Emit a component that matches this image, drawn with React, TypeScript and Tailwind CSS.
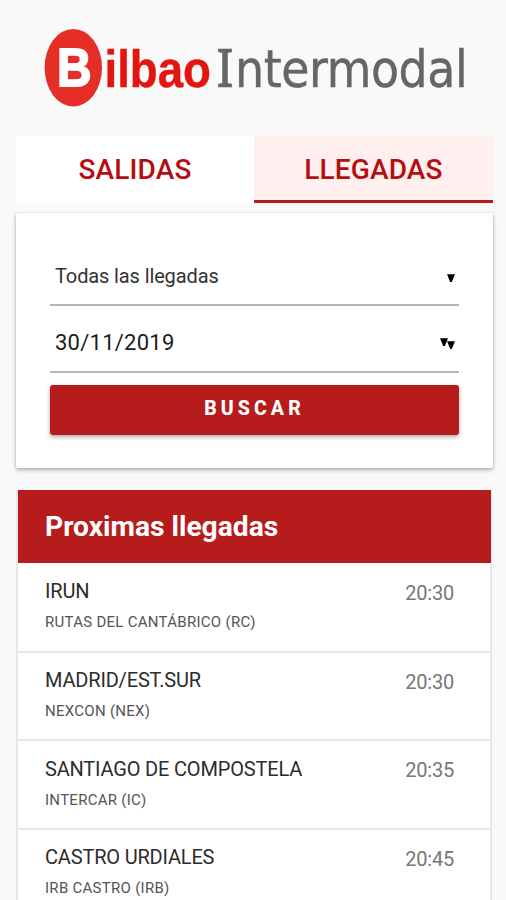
const arrivals = [
  { city: "IRUN", company: "RUTAS DEL CANTÁBRICO (RC)", time: "20:30" },
  { city: "MADRID/EST.SUR", company: "NEXCON (NEX)", time: "20:30" },
  { city: "SANTIAGO DE COMPOSTELA", company: "INTERCAR (IC)", time: "20:35" },
  { city: "CASTRO URDIALES", company: "IRB CASTRO (IRB)", time: "20:45" },
];

function Logo() {
  return (
    <svg width="450" height="90" viewBox="40 26 450 90" role="img" aria-label="Bilbao Intermodal">
      <ellipse cx="73.3" cy="67.7" rx="28.7" ry="38.8" fill="#e52e27" />
      <text x="57" y="86" fontFamily="Liberation Sans" fontWeight="700" fontSize="53" fill="#fff" stroke="#fff" strokeWidth="1.8" textLength="34.5" lengthAdjust="spacingAndGlyphs">
        B
      </text>
      <text x="104.5" y="86.5" fontFamily="Liberation Sans" fontWeight="700" fontSize="52" fill="#e2150f" stroke="#e2150f" strokeWidth="0.4" textLength="106.5" lengthAdjust="spacingAndGlyphs">
        ilbao
      </text>
      <text x="216.3" y="86.5" fontFamily="Noto Sans" fontSize="52" fill="#666" stroke="#666" strokeWidth="0.6">
        I
        <tspan x="235" fontFamily="DejaVu Sans" fontStretch="condensed" fontSize="51" letterSpacing="-0.4" strokeWidth="0.4">
          ntermodal
        </tspan>
      </text>
    </svg>
  );
}

function Triangle() {
  return (
    <svg width="8" height="8" viewBox="0 0 8 8">
      <path d="M0 0.3H8L4.8 8H3.2Z" fill="#000" />
    </svg>
  );
}

export default function App() {
  return (
    <div className="h-[900px] w-[506px] overflow-hidden bg-[#f9f9f9] font-['Roboto',sans-serif]">
      <header className="flex h-[136px] pl-10 pt-[26px]">
        <Logo />
      </header>

      <nav className="ml-4 flex h-[67px] w-[477px] text-[28px] font-medium tracking-[0.15px] text-[#b30f12]">
        <button className="flex w-[238px] items-center justify-center bg-white">
          <span>SALIDAS</span>
        </button>
        <button className="flex flex-1 items-center justify-center border-b-[3px] border-[#b71c1c] bg-[#ffefef] pt-[3px]">
          <span>LLEGADAS</span>
        </button>
      </nav>

      <section className="ml-4 mt-[10px] h-[255px] w-[477px] rounded-[2px] bg-white px-[34px] pt-[34px] shadow-[0_2px_4px_rgba(0,0,0,0.3),0_0_2px_rgba(0,0,0,0.12)]">
        <div className="flex h-[59px] items-center justify-between border-b-2 border-[#b4b4b4] pl-[5px] pr-1">
          <span className="text-[20px] tracking-[-0.12px] text-[#333]">Todas las llegadas</span>
          <span className="pt-1">
            <Triangle />
          </span>
        </div>
        <div className="flex h-[67px] items-center justify-between border-b-2 border-[#b4b4b4] pl-[5px] pr-1 pt-2">
          <span className="text-[22px] tracking-[0.25px] text-[#1c1c1c]">30/11/2019</span>
          <span className="flex pt-[2px]">
            <Triangle />
            <span className="-ml-[1px] pt-[3px]">
              <Triangle />
            </span>
          </span>
        </div>
        <button className="mt-3 h-[50px] w-full rounded-[3px] bg-[#b71c1c] pb-[2px] text-[19.5px] font-extrabold tracking-[4.1px] text-white shadow-[0_2px_4px_rgba(0,0,0,0.35)]">
          BUSCAR
        </button>
      </section>

      <section className="ml-4 mt-[22px] w-[476px] border-x-2 border-[#e8e8e8] bg-white">
        <h2 className="-mr-px flex h-[74px] items-center border-b border-white bg-[#b71c1c] bg-clip-padding pl-[27px] pt-[2px] text-[28.2px] font-bold text-white">
          Proximas llegadas
        </h2>
        <ul>
          {arrivals.map((item) => (
            <li key={item.city} className="flex h-[88.7px] justify-between border-b-2 border-[#e8e8e8] pl-[27px] pr-9 pt-[15.4px]">
              <div>
                <div className="text-[20px] leading-6 tracking-[-0.18px] text-[#2c2c2c]">{item.city}</div>
                <div className="mt-[9px] text-[15px] leading-5 tracking-[0.28px] text-[#555]">{item.company}</div>
              </div>
              <div className="pt-[1.5px] text-[20px] leading-6 tracking-[-0.2px] text-[#777]">{item.time}</div>
            </li>
          ))}
        </ul>
      </section>
    </div>
  );
}
